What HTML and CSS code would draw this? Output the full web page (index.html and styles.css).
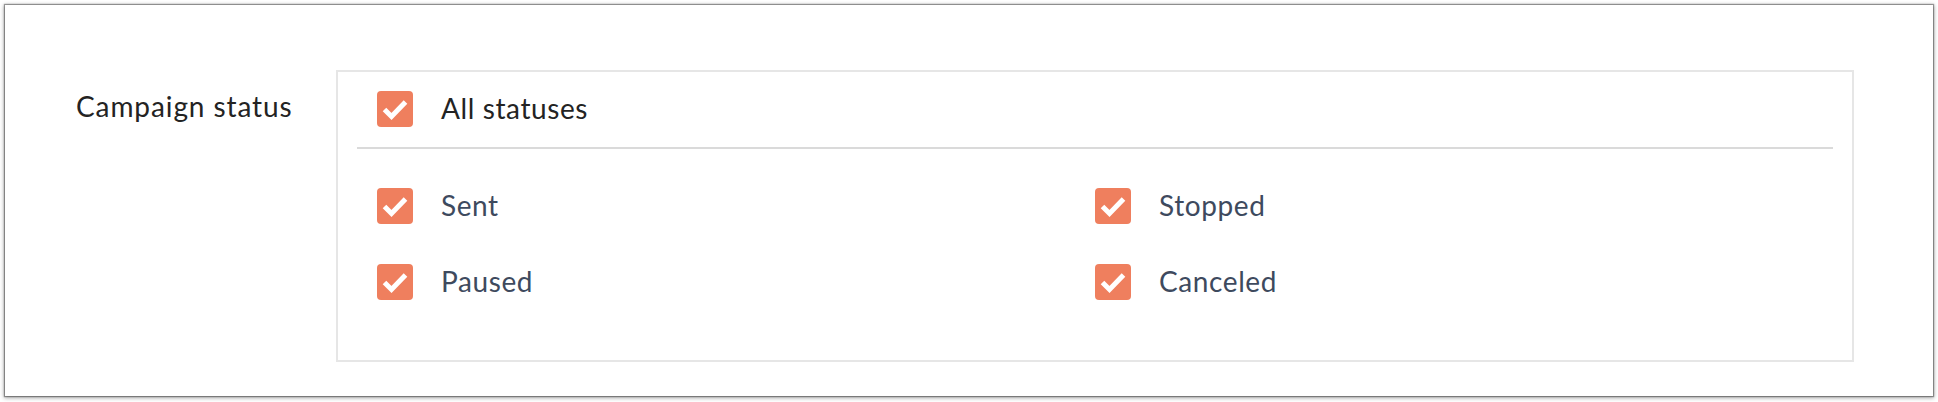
FILE: index.html
```html
<!DOCTYPE html>
<html>
<head>
<meta charset="utf-8">
<link rel="stylesheet" href="styles.css">
</head>
<body>
<div class="frame">
  <div class="field">
    <div class="label">Campaign status</div>
    <div class="box">
      <label class="opt all">
        <span class="cb"><svg viewBox="0 0 36 36"><polyline points="7.5,18.5 14.5,25.5 28.5,11" /></svg></span>
        <span class="txt">All statuses</span>
      </label>
      <div class="divider"></div>
      <div class="grid">
        <label class="opt">
          <span class="cb"><svg viewBox="0 0 36 36"><polyline points="7.5,18.5 14.5,25.5 28.5,11" /></svg></span>
          <span class="txt">Sent</span>
        </label>
        <label class="opt">
          <span class="cb"><svg viewBox="0 0 36 36"><polyline points="7.5,18.5 14.5,25.5 28.5,11" /></svg></span>
          <span class="txt">Stopped</span>
        </label>
        <label class="opt">
          <span class="cb"><svg viewBox="0 0 36 36"><polyline points="7.5,18.5 14.5,25.5 28.5,11" /></svg></span>
          <span class="txt">Paused</span>
        </label>
        <label class="opt">
          <span class="cb"><svg viewBox="0 0 36 36"><polyline points="7.5,18.5 14.5,25.5 28.5,11" /></svg></span>
          <span class="txt">Canceled</span>
        </label>
      </div>
    </div>
  </div>
</div>
</body>
</html>
```
FILE: styles.css
```css
html, body {
  margin: 0;
  padding: 0;
  background: #ffffff;
}
body {
  padding: 5px 0 0 5px;
  height: 402px;
  box-sizing: border-box;
  overflow: hidden;
  font-family: "Lato", "Liberation Sans", sans-serif;
}
.frame {
  width: 1928px;
  height: 391px;
  box-sizing: border-box;
  background: #fff;
  box-shadow: 0 0 1px 1px rgba(0, 0, 0, 0.35), 0 1px 4px 1px rgba(0, 0, 0, 0.35);
  padding: 65px 0 0 71px;
}
.field {
  display: flex;
  align-items: flex-start;
}
.label {
  width: 260px;
  font-size: 28px;
  letter-spacing: 0.9px;
  color: #232323;
  padding-top: 19px;
  line-height: 34px;
}
.box {
  width: 1518px;
  height: 292px;
  box-sizing: border-box;
  border: 2px solid #e6e6e6;
  padding: 19px 19px 0 19px;
}
.opt {
  display: flex;
  align-items: center;
  height: 36px;
  gap: 28px;
  padding-left: 20px;
}
.cb {
  width: 36px;
  height: 36px;
  border-radius: 4px;
  background: #ef7f5e;
  flex: none;
  display: block;
}
.cb svg {
  width: 36px;
  height: 36px;
  display: block;
  fill: none;
  stroke: #fff;
  stroke-width: 5;
}
.txt {
  font-size: 28px;
  letter-spacing: 0.6px;
  color: #3e4a5e;
  line-height: 34px;
  margin-top: -3px;
}
.all .txt {
  color: #232323;
}
.divider {
  height: 2px;
  background: #dadada;
  margin-top: 20px;
}
.grid {
  display: grid;
  grid-template-columns: 718px 718px;
  row-gap: 40px;
  margin-top: 39px;
}
```
